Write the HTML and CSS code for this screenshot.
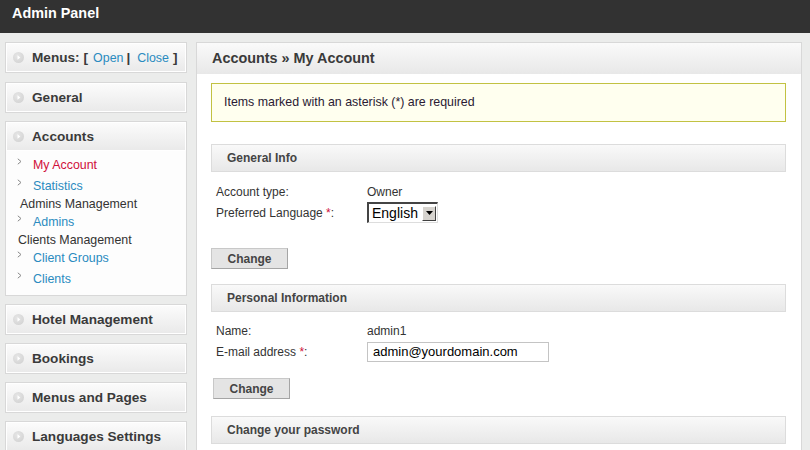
FILE: index.html
```html
<!DOCTYPE html>
<html>
<head>
<meta charset="utf-8">
<title>Admin Panel</title>
<link rel="stylesheet" href="styles.css">
</head>
<body>
<div class="topbar">Admin Panel</div>
<div class="page">
  <aside class="sidebar">
    <div class="box first-box">
      <div class="box-head"><span class="dot"><svg width="11" height="11" viewBox="0 0 11 11"><path d="M4.5 3.2 L7.3 5.5 L4.5 7.8 Z" fill="#fff"/></svg></span><span>Menus:</span><span class="br1">[</span><a class="hl open">Open</a><span class="sep">|</span><a class="hl close">Close</a><span class="br2">]</span></div>
    </div>
    <div class="box">
      <div class="box-head"><span class="dot"><svg width="11" height="11" viewBox="0 0 11 11"><path d="M4.5 3.2 L7.3 5.5 L4.5 7.8 Z" fill="#fff"/></svg></span>General</div>
    </div>
    <div class="box">
      <div class="box-head"><span class="dot"><svg width="11" height="11" viewBox="0 0 11 11"><path d="M4.5 3.2 L7.3 5.5 L4.5 7.8 Z" fill="#fff"/></svg></span>Accounts</div>
      <ul class="menu">
        <li class="link active"><span class="arr"><svg width="5" height="7" viewBox="0 0 5 7"><path d="M0.8 0.8 L4 3.5 L0.8 6.2" fill="none" stroke="#888" stroke-width="1"/></svg></span>My Account</li>
        <li class="link"><span class="arr"><svg width="5" height="7" viewBox="0 0 5 7"><path d="M0.8 0.8 L4 3.5 L0.8 6.2" fill="none" stroke="#888" stroke-width="1"/></svg></span>Statistics</li>
        <li class="group g1">Admins Management</li>
        <li class="link"><span class="arr"><svg width="5" height="7" viewBox="0 0 5 7"><path d="M0.8 0.8 L4 3.5 L0.8 6.2" fill="none" stroke="#888" stroke-width="1"/></svg></span>Admins</li>
        <li class="group g2">Clients Management</li>
        <li class="link"><span class="arr"><svg width="5" height="7" viewBox="0 0 5 7"><path d="M0.8 0.8 L4 3.5 L0.8 6.2" fill="none" stroke="#888" stroke-width="1"/></svg></span>Client Groups</li>
        <li class="link"><span class="arr"><svg width="5" height="7" viewBox="0 0 5 7"><path d="M0.8 0.8 L4 3.5 L0.8 6.2" fill="none" stroke="#888" stroke-width="1"/></svg></span>Clients</li>
      </ul>
    </div>
    <div class="box">
      <div class="box-head"><span class="dot"><svg width="11" height="11" viewBox="0 0 11 11"><path d="M4.5 3.2 L7.3 5.5 L4.5 7.8 Z" fill="#fff"/></svg></span>Hotel Management</div>
    </div>
    <div class="box">
      <div class="box-head"><span class="dot"><svg width="11" height="11" viewBox="0 0 11 11"><path d="M4.5 3.2 L7.3 5.5 L4.5 7.8 Z" fill="#fff"/></svg></span>Bookings</div>
    </div>
    <div class="box">
      <div class="box-head"><span class="dot"><svg width="11" height="11" viewBox="0 0 11 11"><path d="M4.5 3.2 L7.3 5.5 L4.5 7.8 Z" fill="#fff"/></svg></span>Menus and Pages</div>
    </div>
    <div class="box">
      <div class="box-head"><span class="dot"><svg width="11" height="11" viewBox="0 0 11 11"><path d="M4.5 3.2 L7.3 5.5 L4.5 7.8 Z" fill="#fff"/></svg></span>Languages Settings</div>
    </div>
  </aside>
  <main class="main">
    <div class="main-head">Accounts » My Account</div>
    <div class="content">
      <div class="notice">Items marked with an asterisk (*) are required</div>

      <div class="sec-head first">General Info</div>
      <div class="form">
        <div class="row r1"><span class="lbl">Account type:</span><span class="val">Owner</span></div>
        <div class="row r2"><span class="lbl">Preferred Language <span class="req">*</span>:</span>
          <span class="select"><span class="sel-text">English</span><span class="sel-btn"><svg width="7" height="4" viewBox="0 0 7 4"><path d="M0 0 H7 L3.5 4 Z" fill="#000"/></svg></span></span>
        </div>
      </div>
      <button class="btn b1">Change</button>

      <div class="sec-head s2">Personal Information</div>
      <div class="form">
        <div class="row r3"><span class="lbl">Name:</span><span class="val">admin1</span></div>
        <div class="row r4"><span class="lbl">E-mail address <span class="req">*</span>:</span><span class="input">admin@yourdomain.com</span></div>
      </div>
      <button class="btn b2">Change</button>

      <div class="sec-head s3">Change your password</div>
    </div>
  </main>
</div>
</body>
</html>
```

FILE: styles.css
```css
html, body {
  margin: 0;
  padding: 0;
}
body {
  background: #ebeceb;
  font-family: "Liberation Sans", Arial, sans-serif;
  font-size: 12px;
  color: #333;
  width: 810px;
  height: 450px;
  overflow: hidden;
}
.topbar {
  height: 33px;
  box-sizing: border-box;
  background: #323232;
  color: #fff;
  font-weight: bold;
  font-size: 14.4px;
  line-height: 16px;
  padding: 5px 12px;
}
.page {
  display: flex;
  gap: 9px;
  padding: 9px 8px 0 5px;
  align-items: flex-start;
}
.sidebar {
  width: 182px;
  flex: none;
}
.box {
  border: 1px solid #d8d8d8;
  background: #fdfdfd;
  margin-bottom: 8px;
}
.first-box {
  margin-bottom: 9px;
}
.box-head {
  height: 29px;
  display: flex;
  align-items: center;
  padding-left: 7px;
  background: linear-gradient(#fcfcfc, #e9e9e9);
  box-shadow: inset 0 0 0 1px #fff;
  font-weight: bold;
  font-size: 13.6px;
  color: #3a3a3a;
}
.dot {
  width: 11px;
  height: 11px;
  border-radius: 50%;
  background: radial-gradient(circle at 40% 35%, #e6e6e6, #cfcfcf);
  margin-right: 8px;
  display: flex;
  flex: none;
}
.br1 {
  margin-left: 4px;
}
.hl {
  font-weight: normal;
  font-size: 12.4px;
  color: #2a8bc0;
}
.open {
  margin-left: 5px;
}
.sep {
  margin-left: 3px;
}
.close {
  margin-left: 7px;
}
.br2 {
  margin-left: 4px;
}
.menu {
  list-style: none;
  margin: 0;
  padding: 5px 0 7px 11px;
  font-size: 12.4px;
}
.menu li {
  line-height: 18px;
  height: 18px;
}
.link {
  display: flex;
  color: #2a8bc0;
}
.link.active {
  color: #d0103a;
}
.link + .link {
  margin-top: 3px;
}
.arr {
  width: 16px;
  flex: none;
  display: flex;
  align-items: flex-start;
  padding-top: 2px;
  box-sizing: border-box;
}
.group {
  color: #333;
}
.g1 {
  padding-left: 3px;
}
.g2 {
  padding-left: 1px;
}
.main {
  flex: 1;
  background: #fff;
  border: 1px solid #d8d8d8;
  height: 420px;
}
.main-head {
  height: 31px;
  background: linear-gradient(#fafafa, #e8e8e8);
  font-weight: bold;
  font-size: 14.4px;
  color: #3a3a3a;
  line-height: 31px;
  padding-left: 15px;
}
.content {
  padding: 9px 15px 0 14px;
}
.notice {
  border: 1px solid #c2c242;
  background: #ffffef;
  height: 37px;
  line-height: 37px;
  padding: 0 12px;
  color: #2a1a33;
  font-size: 12.4px;
}
.sec-head {
  height: 26px;
  border: 1px solid #dcdcdc;
  background: linear-gradient(#f9f9f9, #e8e8e8);
  font-weight: bold;
  color: #444;
  line-height: 26px;
  padding-left: 15px;
}
.sec-head.first {
  margin-top: 22px;
}
.form {
  padding-left: 5px;
}
.row {
  display: flex;
  align-items: center;
}
.lbl {
  width: 151px;
  flex: none;
}
.req {
  color: #d0103a;
}
.r1 {
  margin-top: 13px;
  height: 14px;
}
.r2 {
  margin-top: 3px;
  height: 21px;
}
.select {
  display: inline-flex;
  align-items: center;
  width: 71px;
  height: 21px;
  box-sizing: border-box;
  border-top: 2px solid #444;
  border-left: 2px solid #444;
  border-right: 1px solid #ddd;
  border-bottom: 1px solid #ddd;
  background: #fff;
  font-size: 14px;
  color: #000;
  padding-left: 3px;
  justify-content: space-between;
}
.sel-btn {
  width: 14px;
  height: 15px;
  background: #d6d3ce;
  border: 1px solid;
  border-color: #fff #404040 #404040 #fff;
  box-sizing: border-box;
  display: flex;
  align-items: center;
  justify-content: center;
  margin-right: 1px;
}
.btn {
  display: block;
  font-family: "Liberation Sans", Arial, sans-serif;
  font-weight: bold;
  font-size: 12px;
  color: #444;
  background: #e4e4e4;
  border: 1px solid #a5a5a5;
  border-top-color: #c8c8c8;
  border-left-color: #c8c8c8;
  height: 21px;
  width: 77px;
  padding: 0;
}
.b1 {
  margin-top: 25px;
}
.s2 {
  margin-top: 15px;
}
.r3 {
  margin-top: 12px;
  height: 14px;
}
.r4 {
  margin-top: 4px;
  height: 19px;
}
.input {
  width: 182px;
  height: 20px;
  box-sizing: border-box;
  border: 1px solid #c4c4c4;
  font-size: 13px;
  color: #000;
  padding-left: 5px;
  line-height: 18px;
}
.b2 {
  margin-top: 17px;
  margin-left: 2px;
}
.s3 {
  margin-top: 17px;
}
```
